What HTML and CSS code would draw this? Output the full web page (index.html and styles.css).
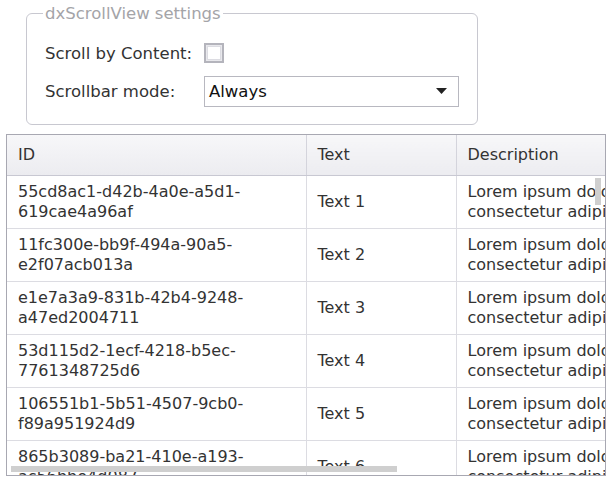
FILE: index.html
```html
<!DOCTYPE html>
<html>
<head>
<meta charset="utf-8">
<link rel="stylesheet" href="styles.css">
</head>
<body>
<div class="page">
  <fieldset class="settings">
    <legend class="legend">dxScrollView settings</legend>
    <div class="row">
      <span class="label">Scroll by Content:</span>
      <span class="checkbox"><span class="checkbox-inner"></span></span>
    </div>
    <div class="row">
      <span class="label">Scrollbar mode:</span>
      <div class="select">
        <span class="select-text">Always</span>
        <svg class="arrow" width="11" height="6" viewBox="0 0 11 6"><path d="M0 0H11L5.5 6Z" fill="#222"/></svg>
      </div>
    </div>
  </fieldset>

  <div class="grid">
    <table class="table">
      <colgroup><col class="c-id"><col class="c-text"><col class="c-desc"></colgroup>
      <thead>
        <tr><th>ID</th><th>Text</th><th>Description</th></tr>
      </thead>
      <tbody>
        <tr><td>55cd8ac1-d42b-4a0e-a5d1-<br>619cae4a96af</td><td>Text 1</td><td>Lorem ipsum dolor sit amet,<br>consectetur adipiscing elit</td></tr>
        <tr><td>11fc300e-bb9f-494a-90a5-<br>e2f07acb013a</td><td>Text 2</td><td>Lorem ipsum dolor sit amet,<br>consectetur adipiscing elit</td></tr>
        <tr><td>e1e7a3a9-831b-42b4-9248-<br>a47ed2004711</td><td>Text 3</td><td>Lorem ipsum dolor sit amet,<br>consectetur adipiscing elit</td></tr>
        <tr><td>53d115d2-1ecf-4218-b5ec-<br>7761348725d6</td><td>Text 4</td><td>Lorem ipsum dolor sit amet,<br>consectetur adipiscing elit</td></tr>
        <tr><td>106551b1-5b51-4507-9cb0-<br>f89a951924d9</td><td>Text 5</td><td>Lorem ipsum dolor sit amet,<br>consectetur adipiscing elit</td></tr>
        <tr><td>865b3089-ba21-410e-a193-<br>ac56bbe4d087</td><td>Text 6</td><td>Lorem ipsum dolor sit amet,<br>consectetur adipiscing elit</td></tr>
      </tbody>
    </table>
    <div class="vscroll"></div>
    <div class="hscroll"></div>
  </div>
</div>
</body>
</html>
```
FILE: styles.css
```css
html, body {
  margin: 0;
  padding: 0;
  background: #fff;
}
body {
  font-family: "DejaVu Sans", Verdana, sans-serif;
  color: #333;
  width: 613px;
  height: 481px;
  overflow: hidden;
}
.page {
  padding: 4px 0 0 6px;
}
.settings {
  margin: 0 0 0 20px;
  width: 451px;
  height: 121px;
  box-sizing: border-box;
  border: 1px solid #c8c8d0;
  border-radius: 6px;
  padding: 15px 18px 0 18px;
}
.legend {
  color: #a4a4a8;
  font-size: 16.5px;
  padding: 0 2px;
  margin-left: -2px;
}
.row {
  display: flex;
  align-items: center;
  height: 30px;
  margin-bottom: 8px;
}
.label {
  font-size: 16.5px;
  color: #333;
  width: 159px;
  flex: none;
}
.checkbox {
  width: 20px;
  height: 20px;
  box-sizing: border-box;
  border: 2px solid #b4b4bc;
  background: #e8e8ec;
  padding: 1px;
  display: flex;
}
.checkbox-inner {
  flex: 1;
  background: #fff;
  border: 1px solid #dcdce2;
}
.select {
  width: 255px;
  height: 31px;
  box-sizing: border-box;
  border: 1px solid #b8b8c0;
  display: flex;
  align-items: center;
  padding: 0 11px 0 4px;
}
.select-text {
  flex: 1;
  font-size: 16.5px;
  color: #111;
}
.arrow {
  display: block;
}
.grid {
  position: relative;
  margin-top: 9px;
  width: 600px;
  height: 342px;
  box-sizing: border-box;
  border: 1px solid #a8a8b2;
  overflow: hidden;
}
.table {
  border-collapse: collapse;
  table-layout: fixed;
  width: 749px;
  font-size: 16px;
}
.c-id { width: 299px; }
.c-text { width: 150px; }
.c-desc { width: 300px; }
th {
  height: 40px;
  box-sizing: border-box;
  text-align: left;
  font-weight: normal;
  padding: 0 10px 0 11px;
  background: linear-gradient(#f7f7f9, #ececf0);
  border-right: 1px solid #d4d4dc;
  border-bottom: 1px solid #c8c8d2;
  color: #333;
}
td {
  height: 53px;
  box-sizing: border-box;
  padding: 0 10px 0 11px;
  line-height: 20px;
  border-right: 1px solid #dcdce2;
  border-bottom: 1px solid #dcdce2;
  white-space: nowrap;
  overflow: hidden;
  vertical-align: middle;
  color: #333;
}
.vscroll {
  position: absolute;
  right: 4px;
  top: 43px;
  width: 6px;
  height: 27px;
  background: #cfcfcf;
}
.hscroll {
  position: absolute;
  left: 4px;
  bottom: 3px;
  width: 386px;
  height: 6px;
  background: #cfcfcf;
}
```
